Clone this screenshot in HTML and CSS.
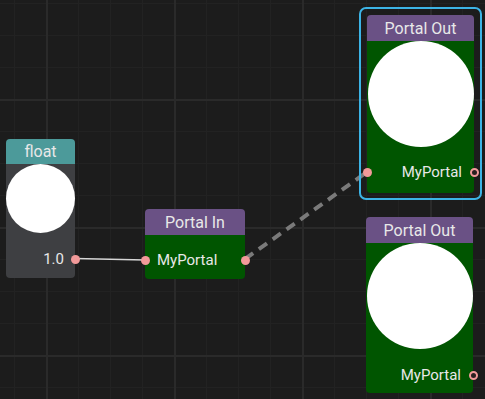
FILE: index.html
```html
<!DOCTYPE html>
<html lang="en">
<head>
  <meta charset="UTF-8">
  <title>Portal Graph</title>
  <link rel="stylesheet" href="styles.css">
</head>
<body>

  <div class="canvas">
    <!-- wires -->
    <svg class="wires" width="485" height="399" viewBox="0 0 485 399">
      <line x1="75" y1="258.5" x2="145" y2="260" stroke="#d6d6d6" stroke-width="1.5"/>
      <line x1="245" y1="259" x2="367" y2="172" stroke="#7a7a7a" stroke-width="4" stroke-dasharray="10 7"/>
    </svg>

    <div class="node node-float">
      <div class="node-head head-teal">float</div>
      <div class="node-body body-gray">
        <div class="preview"></div>
        <div class="row row-right">1.0<span class="port port-out"></span></div>
      </div>
    </div>

    <div class="node node-in">
      <div class="node-head head-purple">Portal In</div>
      <div class="node-body body-green">
        <div class="row row-left"><span class="port port-in"></span>MyPortal<span class="port port-out"></span></div>
      </div>
    </div>

    <div class="selected">
      <div class="node node-out">
        <div class="node-head head-purple">Portal Out</div>
        <div class="node-body body-green">
          <div class="preview"></div>
          <div class="row row-right"><span class="port port-in"></span>MyPortal<span class="port port-out hollow"></span></div>
        </div>
      </div>
    </div>

    <div class="node node-out2">
      <div class="node-head head-purple">Portal Out</div>
      <div class="node-body body-green">
        <div class="preview"></div>
        <div class="row row-right">MyPortal<span class="port port-out hollow"></span></div>
      </div>
    </div>
  </div>

</body>
</html>
```

FILE: styles.css
```css
body {
  margin: 0;
  font-family: Roboto, "Noto Sans", sans-serif;
  background-color: #1c1c1c;
}
.canvas {
  position: relative;
  width: 485px;
  height: 399px;
  overflow: hidden;
  background-color: #1c1c1c;
  background-image:
    linear-gradient(to right, #2a2a2a 2px, transparent 2px),
    linear-gradient(to bottom, #2a2a2a 2px, transparent 2px),
    linear-gradient(to right, #222 1px, transparent 1px),
    linear-gradient(to bottom, #222 1px, transparent 1px);
  background-size: 128px 128px, 128px 128px, 32px 32px, 32px 32px;
  background-position: 46px 0, 0 99px, 14px 0, 0 3px;
}
.wires {
  position: absolute;
  left: 0;
  top: 0;
}
.node {
  position: absolute;
  display: flex;
  flex-direction: column;
  border-radius: 4px;
  color: #e8e8e8;
  font-size: 15px;
}
.node-head {
  height: 26px;
  line-height: 27px;
  font-size: 16px;
  text-align: center;
  border-radius: 4px 4px 0 0;
  flex: none;
}
.head-teal {
  background-color: #4c9a9a;
  height: 25px;
  line-height: 26px;
}
.head-purple {
  background-color: #6a5185;
}
.node-body {
  flex: 1;
  display: flex;
  flex-direction: column;
  border-radius: 0 0 4px 4px;
}
.body-gray {
  background-color: #3e3f42;
}
.body-green {
  background-color: #005500;
}
.preview {
  background-color: #fff;
  border-radius: 50%;
  align-self: center;
  flex: none;
}
.row {
  position: relative;
  display: flex;
  align-items: center;
  height: 20px;
}
.row-right {
  justify-content: flex-end;
}
.port {
  position: absolute;
  top: 50%;
  width: 9px;
  height: 9px;
  margin-top: -4.5px;
  border-radius: 50%;
  background-color: #f29a9a;
  box-sizing: border-box;
}
.port-in {
  left: -4.5px;
}
.port-out {
  right: -4.5px;
}
.port.hollow {
  background-color: #2a2020;
  border: 2px solid #f29a9a;
}

/* float */
.node-float {
  left: 6px;
  top: 139px;
  width: 69px;
  height: 139px;
}
.node-float .preview {
  width: 69px;
  height: 69px;
}
.node-float .row {
  margin-top: auto;
  margin-bottom: 9px;
  padding-right: 11px;
}

/* portal in */
.node-in {
  left: 145px;
  top: 209px;
  width: 100px;
  height: 70px;
}
.node-in .row {
  margin-top: 15px;
  padding-left: 12px;
}

/* portal out, selected */
.selected {
  position: absolute;
  left: 359px;
  top: 7px;
  width: 119px;
  height: 189px;
  border: 2px solid #3cb4e6;
  border-radius: 7px;
}
.node-out {
  left: 6px;
  top: 6px;
  width: 107px;
  height: 178px;
}
.node-out .preview,
.node-out2 .preview {
  width: 106px;
  height: 106px;
}
.node-out .row,
.node-out2 .row {
  margin-top: auto;
  margin-bottom: 11px;
  padding-right: 12px;
}
.node-out2 .row {
  margin-bottom: 8px;
}

/* portal out 2 */
.node-out2 {
  left: 366px;
  top: 217px;
  width: 107px;
  height: 176px;
}
```
